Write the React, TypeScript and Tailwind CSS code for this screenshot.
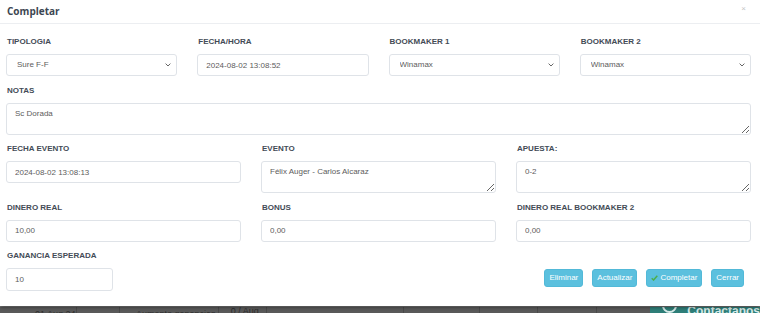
import React from "react";

const labelCls =
  "h-[10px] mb-[7px] pl-px text-[8px] leading-[10px] font-bold uppercase text-[#434b56] whitespace-nowrap";
const boxCls =
  "block w-full border border-[#dfe3e8] rounded-[3px] bg-white text-[8px] text-[#5c5c5c] outline-none";

function Field({ title, children }: { title: string; children: React.ReactNode }) {
  return (
    <div className="flex flex-col min-w-0">
      <div className={labelCls}>{title}</div>
      {children}
    </div>
  );
}

function TextInput({ value, className = "" }: { value: string; className?: string }) {
  return <input readOnly defaultValue={value} className={`${boxCls} h-[22px] px-[8px] ${className}`} />;
}

function Area({ value }: { value: string }) {
  return (
    <textarea
      readOnly
      defaultValue={value}
      className={`${boxCls} h-[32px] px-[8px] pt-[5px] leading-[10px] resize-y`}
    />
  );
}

function Select({ value }: { value: string }) {
  return (
    <div className="relative h-[22px]">
      <select
        defaultValue={value}
        className={`${boxCls} h-[22px] py-0 pl-[10px] pr-5 leading-[20px] appearance-none`}
      >
        <option>{value}</option>
      </select>
      <svg
        className="absolute right-[6px] top-[9px] pointer-events-none"
        width="6"
        height="4"
        viewBox="0 0 6 4"
      >
        <path d="M0.6 0.6 L3 3 L5.4 0.6" fill="none" stroke="#666" strokeWidth="1" />
      </svg>
    </div>
  );
}

function Btn({ children }: { children: React.ReactNode }) {
  return (
    <button className="h-[18px] px-[4px] flex items-center gap-[2px] rounded-[3px] bg-[#5bc0de] border border-[#52b9d8] text-white text-[8px] leading-none">
      {children}
    </button>
  );
}

export default function App() {
  return (
    <div
      className="w-[760px] h-[313px] overflow-hidden bg-[#5a5a5a] flex flex-col"
      style={{ fontFamily: '"Liberation Sans", Arial, sans-serif' }}
    >
      <div className="h-[306px] shrink-0 bg-white flex flex-col shadow-[0_1px_4px_rgba(0,0,0,0.5)] relative z-10">
        {/* header */}
        <div className="h-[24px] shrink-0 border-b border-[#eceef1] flex items-center justify-between pl-[7px] pr-[14px]">
          <span
            className="text-[10px] font-bold text-[#3c4652] -mt-[1px]"
            style={{ fontFamily: '"Open Sans", sans-serif' }}
          >
            Completar
          </span>
          <span className="text-[8px] text-[#c4c4c4] -mt-[6px]">×</span>
        </div>

        {/* body */}
        <div className="flex flex-col gap-[9.5px] pl-[6px] pr-[9px] pt-[13px]">
          <div className="grid grid-cols-4 gap-x-[20px]">
            <Field title="Tipologia">
              <Select value="Sure F-F" />
            </Field>
            <Field title="Fecha/Hora">
              <TextInput value="2024-08-02 13:08:52" />
            </Field>
            <Field title="Bookmaker 1">
              <Select value="Winamax" />
            </Field>
            <Field title="Bookmaker 2">
              <Select value="Winamax" />
            </Field>
          </div>

          <Field title="Notas">
            <Area value="Sc Dorada" />
          </Field>

          <div className="grid grid-cols-3 gap-x-[20px] items-start">
            <Field title="Fecha evento">
              <TextInput value="2024-08-02 13:08:13" />
            </Field>
            <Field title="Evento">
              <Area value="Félix Auger - Carlos Alcaraz" />
            </Field>
            <Field title="Apuesta:">
              <Area value="0-2" />
            </Field>
          </div>

          <div className="grid grid-cols-3 gap-x-[20px]">
            <Field title="Dinero real">
              <TextInput value="10,00" />
            </Field>
            <Field title="Bonus">
              <TextInput value="0,00" />
            </Field>
            <Field title="Dinero real bookmaker 2">
              <TextInput value="0,00" />
            </Field>
          </div>

          <div className="flex items-end justify-between">
            <div className="w-[107px]">
              <Field title="Ganancia esperada">
                <TextInput value="10" className="h-[23px]" />
              </Field>
            </div>
            <div className="flex gap-[9px] mr-[7px] mb-[4px]">
              <Btn>Eliminar</Btn>
              <Btn>Actualizar</Btn>
              <Btn>
                <svg width="7" height="6" viewBox="0 0 7 6">
                  <path d="M0.7 3.2 L2.6 5 L6.3 0.8" fill="none" stroke="#4cae4c" strokeWidth="1.5" />
                </svg>
                Completar
              </Btn>
              <Btn>Cerrar</Btn>
            </div>
          </div>
        </div>
      </div>

      {/* dimmed page behind the modal */}
      <div className="flex-1 flex border-t border-[#7a7a7a] text-[#2e2e2e] text-[9px] leading-none overflow-hidden">
        <div className="w-[78px] border-r border-[#4a4a4a] pt-[3px] pl-[35px] whitespace-nowrap">01 Aug 24</div>
        <div className="w-[44px] border-r border-[#4a4a4a]" />
        <div className="w-[101px] border-r border-[#4a4a4a] pt-[3px] pl-[16px] whitespace-nowrap">
          Aumento ganancias
        </div>
        <div className="w-[49px] border-r border-[#4a4a4a] pl-[12px] whitespace-nowrap">0 / Aug</div>
        <div className="w-[140px] border-r border-[#4a4a4a]" />
        <div className="w-[78px] border-r border-[#4a4a4a]" />
        <div className="w-[60px] border-r border-[#4a4a4a]" />
        <div className="w-[60px] border-r border-[#4a4a4a]" />
        <div className="w-[55px]" />
        <div className="flex-1 bg-[#2f7f79] flex items-start pl-[12px] gap-[10px] text-[#d8ecea] text-[12px] font-bold">
          <span className="w-[15px] h-[15px] shrink-0 rounded-full border-2 border-[#d8ecea] -mt-[9px]" />
          <span className="-mt-[2px] whitespace-nowrap">Contactanos</span>
        </div>
      </div>
    </div>
  );
}
